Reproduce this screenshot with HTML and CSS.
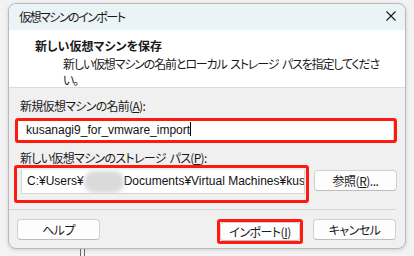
FILE: index.html
```html
<!DOCTYPE html>
<html>

<head>
    <title>仮想マシンのインポート</title>
    <link rel="stylesheet" href="styles.css">
</head>

<body>
    <div class="dialog">
        <div class="titlebar">
            <span class="title">仮想マシンのインポート</span>
            <svg class="close" width="10" height="10" viewBox="0 0 10 10">
                <path d="M0.5 0.5L9.5 9.5M9.5 0.5L0.5 9.5" stroke="#1a1a1a" stroke-width="1.1" fill="none"/>
            </svg>
        </div>
        <div class="header">
            <div class="heading">新しい仮想マシンを保存</div>
            <div class="desc">新しい仮想マシンの名前とローカル ストレージ パスを指定してくださ<br>い。</div>
        </div>
        <div class="content">
            <div class="label">新規仮想マシンの名前(<u>A</u>):</div>
            <div class="mark name-mark">
                <div class="textbox latin">kusanagi9_for_vmware_import<span class="caret"></span></div>
            </div>
            <div class="label path-label">新しい仮想マシンのストレージ パス(<u>P</u>):</div>
            <div class="path-row">
                <div class="mark path-mark">
                    <div class="textbox latin">C:¥Users¥<span class="blur"></span>Documents¥Virtual Machines¥kus</div>
                </div>
                <button class="btn browse">参照(<u>R</u>)...</button>
            </div>
        </div>
        <div class="footer">
            <button class="btn">ヘルプ</button>
            <div class="spacer"></div>
            <div class="mark import-mark"><button class="btn">インポート(<u>I</u>)</button></div>
            <button class="btn">キャンセル</button>
        </div>
    </div>
    <div class="behind"></div>
</body>

</html>
```

FILE: styles.css
```css
body {
    margin: 0;
    height: 256px;
    overflow: hidden;
    background-color: #f3f3f3;
    font-family: "Noto Sans CJK JP", "Noto Sans", sans-serif;
    font-size: 12px;
    color: #1a1a1a;
    font-feature-settings: "palt";
    letter-spacing: -0.7px;
}

.dialog {
    margin: 3px 0 0 8px;
    width: 396px;
    height: 244px;
    border: 1px solid #b9b9b9;
    border-radius: 8px;
    overflow: hidden;
    background-color: #f0f0f0;
    box-shadow: 0 1px 4px rgba(0, 0, 0, 0.15);
    display: flex;
    flex-direction: column;
}

.titlebar {
    height: 26px;
    flex-shrink: 0;
    background-color: #eaf3f6;
    display: flex;
    align-items: center;
    padding: 0 9px 0 10px;
}

.title {
    flex: 1;
    line-height: 14px;
    letter-spacing: -1.5px;
}

.close {
    margin-top: -3px;
}

.header {
    height: 58px;
    flex-shrink: 0;
    background-color: #fff;
    border-bottom: 1px solid #dcdcdc;
    padding: 8px 0 0 26px;
    box-sizing: border-box;
}

.heading {
    font-weight: bold;
    line-height: 16px;
    letter-spacing: 0;
}

.desc {
    margin: 2px 0 0 28px;
    line-height: 16px;
    white-space: nowrap;
    letter-spacing: -1.15px;
    word-spacing: 2px;
}

.content {
    padding: 11px 8px 0 6px;
}

.label {
    line-height: 14px;
    padding-left: 5px;
    word-spacing: 2px;
}

.mark {
    border: 3px solid #ff1a0f;
    border-radius: 3px;
}

.name-mark {
    margin-top: 5px;
    background-color: #fff;
}

.textbox {
    height: 19px;
    line-height: 19px;
    padding-left: 8px;
    background-color: #fff;
    border-right: 1px solid #d4d4d4;
    white-space: nowrap;
    overflow: hidden;
}

.latin {
    font-family: "Liberation Sans", Arial, sans-serif;
    font-size: 12px;
    font-feature-settings: normal;
    letter-spacing: 0;
    color: #111;
}

.caret {
    display: inline-block;
    width: 1px;
    height: 14px;
    background-color: #000;
    vertical-align: -2px;
}

.path-label {
    margin-top: 8px;
}

.path-row {
    display: flex;
    align-items: flex-start;
    margin-left: -1px;
}

.path-mark {
    width: 284px;
    height: 30px;
    padding: 2px 1px 0 4px;
    box-sizing: content-box;
}

.path-mark .textbox {
    height: 23px;
    line-height: 23px;
    padding-left: 5px;
    border: 1px solid #d4d4d4;
    border-top: none;
}

.blur {
    display: inline-block;
    width: 40px;
    height: 22px;
    vertical-align: middle;
    background-color: #dadada;
    border-radius: 10px;
    filter: blur(2px);
}

.btn {
    height: 21px;
    padding: 0;
    font-family: inherit;
    font-size: 12px;
    font-feature-settings: "palt";
    letter-spacing: -0.5px;
    color: #1a1a1a;
    background-color: #fdfdfd;
    border: 1px solid #d0d0d0;
    border-bottom-color: #bdbdbd;
    border-radius: 4px;
    width: 83px;
}

.browse {
    margin: 5px 0 0 5px;
}

.footer {
    margin-top: auto;
    border-top: 1px solid #d6d6d6;
    margin-right: 9px;
    height: 39px;
    flex-shrink: 0;
    box-sizing: border-box;
    display: flex;
    align-items: flex-start;
    padding: 9px 0 0 8px;
}

.spacer {
    flex: 1;
}

.import-mark {
    margin-right: 10px;
}

.import-mark .btn {
    height: 19px;
    width: 80px;
}

.behind {
    margin-left: 80px;
    width: 3px;
    height: 10px;
    border-left: 1px solid #666;
    border-right: 1px solid #666;
}
```
